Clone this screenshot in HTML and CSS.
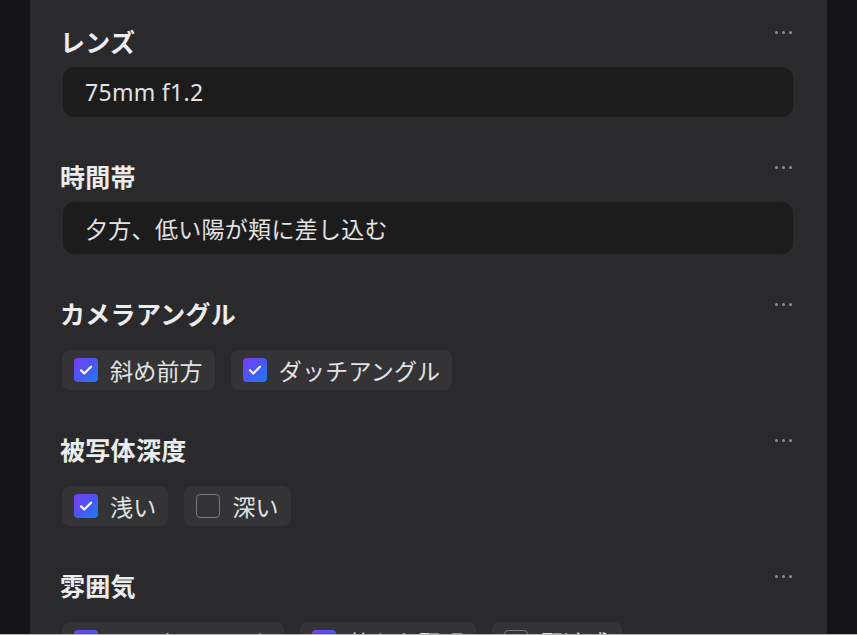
FILE: index.html
```html
<!DOCTYPE html>
<html lang="ja">
<head>
    <meta charset="UTF-8">
    <meta name="viewport" content="width=device-width, initial-scale=1.0">
    <title>ショット設定</title>
    <link rel="stylesheet" href="styles.css">
</head>
<body>
    <div class="panel">
        <div class="section">
            <div class="section-head">
                <span class="label">レンズ</span>
                <span class="more"><i></i><i></i><i></i></span>
            </div>
            <div class="field">75mm f1.2</div>
        </div>

        <div class="section">
            <div class="section-head">
                <span class="label">時間帯</span>
                <span class="more"><i></i><i></i><i></i></span>
            </div>
            <div class="field">夕方、低い陽が頬に差し込む</div>
        </div>

        <div class="section">
            <div class="section-head">
                <span class="label">カメラアングル</span>
                <span class="more"><i></i><i></i><i></i></span>
            </div>
            <div class="chips">
                <label class="chip"><span class="box checked"></span>斜め前方</label>
                <label class="chip"><span class="box checked"></span>ダッチアングル</label>
            </div>
        </div>

        <div class="section">
            <div class="section-head">
                <span class="label">被写体深度</span>
                <span class="more"><i></i><i></i><i></i></span>
            </div>
            <div class="chips">
                <label class="chip"><span class="box checked"></span>浅い</label>
                <label class="chip"><span class="box"></span>深い</label>
            </div>
        </div>

        <div class="section">
            <div class="section-head">
                <span class="label">雰囲気</span>
                <span class="more"><i></i><i></i><i></i></span>
            </div>
            <div class="chips">
                <label class="chip"><span class="box checked"></span>ノスタルジック</label>
                <label class="chip"><span class="box checked"></span>静かな緊張</label>
                <label class="chip"><span class="box"></span>緊迫感</label>
            </div>
        </div>
    </div>
</body>
</html>
```

FILE: styles.css
```css
html, body {
    height: 100%;
}
body {
    margin: 0;
    box-sizing: border-box;
    border-bottom: 1px solid #b4b4b6;
    background-color: #141418;
    font-family: "Noto Sans", "Noto Sans CJK JP", sans-serif;
    color: #e6e6e6;
    overflow: hidden;
}
.panel {
    margin: 0 30px;
    min-height: 100%;
    padding: 26px 34px 0 32px;
    background: #2a2a2d;
    box-sizing: border-box;
}
.section {
    margin-bottom: 44px;
}
.section-head {
    display: flex;
    justify-content: space-between;
    align-items: flex-start;
    height: 32px;
}
.label {
    font-size: 25px;
    font-weight: bold;
    line-height: 32px;
    letter-spacing: 0.3px;
    color: #ececec;
    margin-left: -2px;
}
.more {
    display: flex;
    gap: 4px;
    padding-top: 5px;
    margin-right: 1px;
}
.more i {
    width: 3px;
    height: 3px;
    border-radius: 50%;
    background: #8c8c90;
}
.field {
    margin-top: 9px;
    margin-left: 1px;
    padding: 9px 22px;
    background: #1c1c1d;
    border-radius: 11px;
    font-size: 23px;
    letter-spacing: 0.3px;
    color: #e2e2e2;
}
.chips {
    display: flex;
    gap: 16px;
    margin-top: 20px;
}
.chip {
    display: flex;
    align-items: center;
    gap: 12px;
    height: 40px;
    padding: 0 12px;
    background: #343437;
    border-radius: 8px;
    font-size: 23px;
    letter-spacing: 0.2px;
    color: #e2e2e2;
}
.box {
    width: 24px;
    height: 24px;
    border: 1px solid #7a7a7e;
    border-radius: 4px;
    box-sizing: border-box;
}
.box.checked {
    border: none;
    background:
        url("data:image/svg+xml,%3Csvg xmlns='http://www.w3.org/2000/svg' viewBox='0 0 24 24'%3E%3Cpath d='M7 12.3l3.2 3.2L17 8.7' fill='none' stroke='white' stroke-width='2.2' stroke-linecap='round' stroke-linejoin='round'/%3E%3C/svg%3E") center / 24px 24px no-repeat,
        linear-gradient(135deg, #7a3cf2 0%, #4a56f4 50%, #1b7cf2 100%);
}
```
